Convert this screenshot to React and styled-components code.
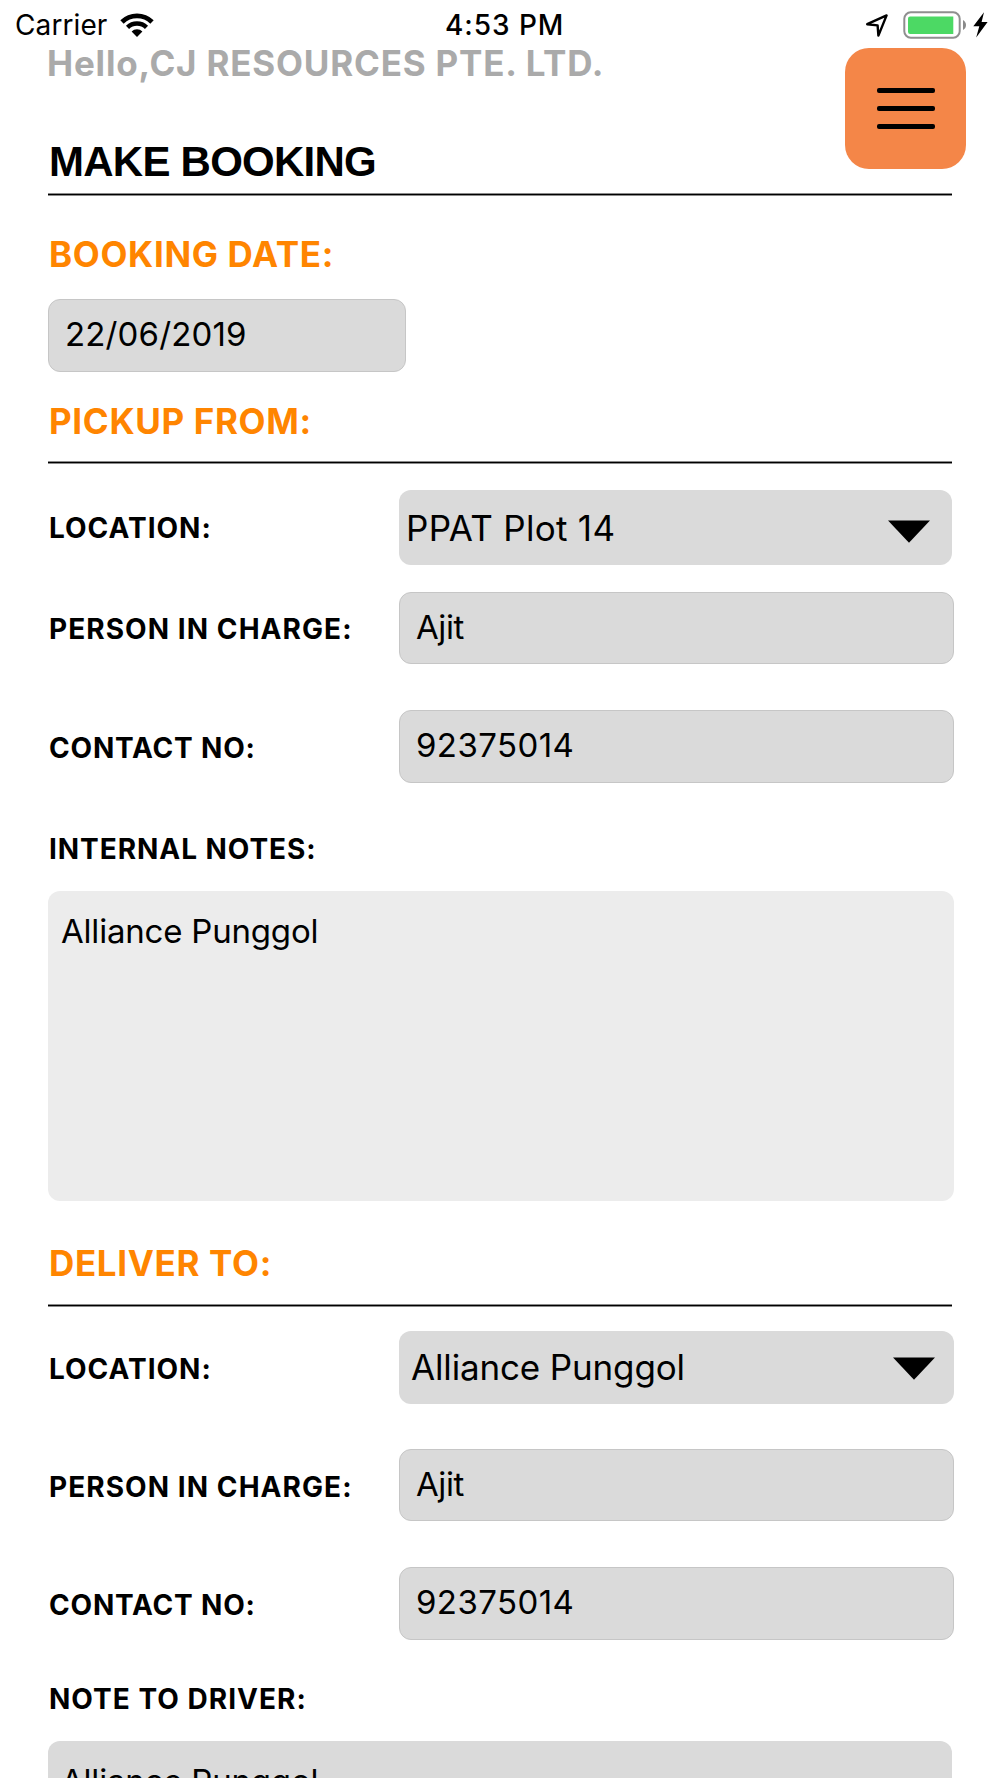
import React from 'react';
import styled, { createGlobalStyle } from 'styled-components';

const GlobalStyle = createGlobalStyle`
    * {
        box-sizing: border-box;
    }
    body {
        margin: 0;
        background: #fff;
        color: #000;
        font-family: Inter, "Liberation Sans", sans-serif;
    }
`

const Screen = styled.div`
    width: 1000px;
    height: 1778px;
    overflow: hidden;
    background: #fff;
`

const StatusBar = styled.div`
    display: grid;
    grid-template-columns: 430px 1fr auto;
    align-items: center;
    height: 48px;
    padding: 2px 12px 0 15px;
`

const Carrier = styled.div`
    display: flex;
    align-items: center;
    gap: 13px;
    font-size: 28px;
    letter-spacing: 0.1px;
`

const Clock = styled.div`
    font-size: 28px;
    font-weight: 500;
    letter-spacing: 0.95px;
`

const StatusIcons = styled.div`
    display: flex;
    align-items: center;
`

const Header = styled.header`
    display: flex;
    justify-content: space-between;
    height: 145px;
    padding: 0 34px 0 47px;
`

const Greeting = styled.p`
    margin: 0;
    font-size: 35px;
    line-height: 30px;
    font-weight: 700;
    letter-spacing: 0.8px;
    color: #aaa;
    white-space: nowrap;
`

const PageTitle = styled.h1`
    margin: 59.5px 0 0 2px;
    font-family: "Liberation Sans", Arial, sans-serif;
    font-size: 42px;
    line-height: 48px;
    font-weight: 700;
    letter-spacing: -0.75px;
`

const MenuButton = styled.button`
    display: flex;
    flex-direction: column;
    align-items: center;
    justify-content: center;
    gap: 13px;
    width: 121px;
    height: 121px;
    padding: 0 0 0 1px;
    border: none;
    border-radius: 24px;
    background: #f48648;
`

const MenuLine = styled.span`
    width: 58px;
    height: 5px;
    border-radius: 2px;
    background: #000;
`

const Form = styled.main`
    width: 906px;
    margin-left: 48px;
`

const Rule = styled.div`
    width: 904px;
    height: 3px;
    margin-top: ${props => props.$top || 0}px;
    border: solid #8a8a8a;
    border-width: 1px 0;
    background: #000;
`

const SectionTitle = styled.h2`
    margin: ${props => props.$top}px 0 0 1px;
    font-size: 35px;
    line-height: 42px;
    font-weight: 700;
    letter-spacing: 0.66px;
    color: #ff8500;
`

const Row = styled.div`
    display: grid;
    grid-template-columns: 351px 1fr;
    align-items: center;
    margin-top: ${props => props.$top}px;
`

const Label = styled.div`
    margin-top: ${props => props.$top || 0}px;
    padding: ${props => props.$drop || 0}px 0 0 1px;
    font-size: 28px;
    line-height: 34px;
    font-weight: 700;
    letter-spacing: ${props => props.$spacing || 1.06}px;
`

const Field = styled.div`
    width: ${props => props.$width || '100%'};
    height: 72.6px;
    margin-top: ${props => props.$top || 0}px;
    padding: 0 16px;
    border: 1px solid #c6c6c6;
    border-radius: 12px;
    background: #dadada;
    font-size: 33px;
    line-height: 69.4px;
    letter-spacing: ${props => props.$spacing || 0.15}px;
`

const Select = styled.div`
    display: flex;
    align-items: center;
    justify-content: space-between;
    width: ${props => props.$width || 555}px;
    height: ${props => props.$height || 72.6}px;
    padding: 0 ${props => props.$right || 19.5}px 0 ${props => props.$left}px;
    border-radius: 12px;
    background: #dadada;
    font-size: 35px;
    letter-spacing: ${props => props.$spacing}px;

    svg {
        margin-top: ${props => props.$arrowDrop}px;
    }
`

const Notes = styled.div`
    width: ${props => props.$width || 906}px;
    height: 309.5px;
    margin-top: 25px;
    padding: 20px 13px;
    border-radius: 12px;
    background: ${props => props.$color};
    font-size: 33px;
    line-height: 40px;
    letter-spacing: -0.2px;
`

const WifiIcon = () => (
    <svg width="34" height="26" viewBox="0 0 34 26">
        <path d="M2 10A21.4 21.4 0 0 1 32 10" fill="none" stroke="#000" strokeWidth="4.8" />
        <path d="M7.5 15.4A13.6 13.6 0 0 1 26.5 15.4" fill="none" stroke="#000" strokeWidth="4.4" />
        <path d="M17 25L11.6 19.6A7.6 7.6 0 0 1 22.4 19.6Z" />
    </svg>
)

const LocationIcon = () => (
    <svg width="24" height="26" viewBox="0 0 24 26">
        <path d="M2.2 12.2L21.6 3.4L13.4 23.6L12.6 13.4Z" fill="none" stroke="#000" strokeWidth="2.4" strokeLinejoin="round" />
    </svg>
)

const BatteryIcon = styled(props => (
    <svg width="66" height="28" viewBox="0 0 66 28" {...props}>
        <rect x="1.3" y="1.3" width="55.4" height="25.4" rx="6.5" fill="none" stroke="#8f8f8f" strokeWidth="2" />
        <path d="M7.5 5.4H50.3V23H7.5A2.3 2.3 0 0 1 5 20.7V7.7A2.3 2.3 0 0 1 7.5 5.4Z" fill="#4cd964" />
        <path d="M60 9C64 11 64 17 60 19Z" fill="#8a8a8a" />
    </svg>
))`
    margin: 0 4px 0 14px;
`

const BoltIcon = () => (
    <svg width="15" height="26" viewBox="0 0 15 26">
        <path d="M11 0.3L0.3 14.2H6.3L3.2 25.6L14.6 10H8.6Z" />
    </svg>
)

const DropArrow = () => (
    <svg width="42" height="23" viewBox="0 0 42 23">
        <path d="M0 0.5H42L21 22.8Z" />
    </svg>
)

const App = () => {
    return (
        <>
            <GlobalStyle />
            <Screen>
                <StatusBar>
                    <Carrier>
                        Carrier
                        <WifiIcon />
                    </Carrier>
                    <Clock>4:53 PM</Clock>
                    <StatusIcons>
                        <LocationIcon />
                        <BatteryIcon />
                        <BoltIcon />
                    </StatusIcons>
                </StatusBar>
                <Header>
                    <div>
                        <Greeting>Hello,CJ RESOURCES PTE. LTD.</Greeting>
                        <PageTitle>MAKE BOOKING</PageTitle>
                    </div>
                    <MenuButton aria-label="Menu">
                        <MenuLine />
                        <MenuLine />
                        <MenuLine />
                    </MenuButton>
                </Header>
                <Form>
                    <Rule />
                    <SectionTitle $top={37.3}>BOOKING DATE:</SectionTitle>
                    <Field $top={24.2} $width="358px">22/06/2019</Field>

                    <SectionTitle $top={27.6}>PICKUP FROM:</SectionTitle>
                    <Rule $top={19.3} />
                    <Row $top={26.5}>
                        <Label $drop={1} $spacing={1}>LOCATION:</Label>
                        <Select $left={7} $width={552.5} $height={74.6} $right={21.5} $spacing={0.3} $arrowDrop={8}>
                            PPAT Plot 14
                            <DropArrow />
                        </Select>
                    </Row>
                    <Row $top={26.6}>
                        <Label $drop={3}>PERSON IN CHARGE:</Label>
                        <Field $spacing={-0.4}>Ajit</Field>
                    </Row>
                    <Row $top={45.7}>
                        <Label $drop={3} $spacing={0.8}>CONTACT NO:</Label>
                        <Field $spacing={0.41}>92375014</Field>
                    </Row>
                    <Label $top={49.6} $spacing={0.95}>INTERNAL NOTES:</Label>
                    <Notes $color="#ececec">Alliance Punggol</Notes>

                    <SectionTitle $top={41.2}>DELIVER TO:</SectionTitle>
                    <Rule $top={20.1} />
                    <Row $top={24}>
                        <Label $drop={3} $spacing={1}>LOCATION:</Label>
                        <Select $left={12} $spacing={-0.15} $arrowDrop={3}>
                            Alliance Punggol
                            <DropArrow />
                        </Select>
                    </Row>
                    <Row $top={45.4}>
                        <Label $drop={3}>PERSON IN CHARGE:</Label>
                        <Field $spacing={-0.4}>Ajit</Field>
                    </Row>
                    <Row $top={45.8}>
                        <Label $drop={3} $spacing={0.8}>CONTACT NO:</Label>
                        <Field $spacing={0.41}>92375014</Field>
                    </Row>
                    <Label $top={42.6} $spacing={1.02}>NOTE TO DRIVER:</Label>
                    <Notes $color="#dadada" $width={904}>Alliance Punggol</Notes>
                </Form>
            </Screen>
        </>
    )
}

export default App;
